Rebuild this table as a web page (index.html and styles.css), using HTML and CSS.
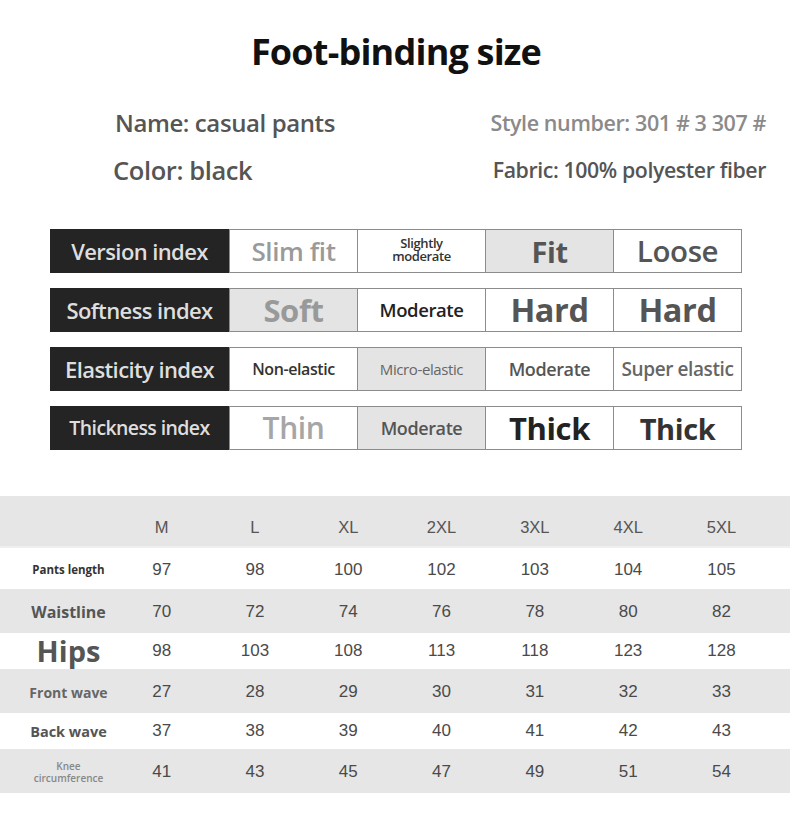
FILE: index.html
```html
<!DOCTYPE html>
<html>
<head>
<meta charset="utf-8">
<link rel="stylesheet" href="styles.css">
</head>
<body>
<div class="page">
  <h1 class="title">Foot-binding size</h1>
  <div class="info">
    <div class="info-left name">Name: casual pants</div>
    <div class="info-right style">Style number: 301 # 3 307 #</div>
    <div class="info-left color">Color: black</div>
    <div class="info-right fabric">Fabric: 100% polyester fiber</div>
  </div>

  <div class="index-table">
    <div class="irow">
      <div class="ilabel">Version index</div>
      <div class="icell c-slim">Slim fit</div>
      <div class="icell c-slight"><span class="ln">Slightly</span><span class="ln">moderate</span></div>
      <div class="icell sel c-fit">Fit</div>
      <div class="icell c-loose">Loose</div>
    </div>
    <div class="irow">
      <div class="ilabel">Softness index</div>
      <div class="icell sel c-soft">Soft</div>
      <div class="icell c-mod1">Moderate</div>
      <div class="icell c-hard">Hard</div>
      <div class="icell c-hard">Hard</div>
    </div>
    <div class="irow">
      <div class="ilabel">Elasticity index</div>
      <div class="icell c-non">Non-elastic</div>
      <div class="icell sel c-micro">Micro-elastic</div>
      <div class="icell c-mod2">Moderate</div>
      <div class="icell c-super">Super elastic</div>
    </div>
    <div class="irow">
      <div class="ilabel small">Thickness index</div>
      <div class="icell c-thin">Thin</div>
      <div class="icell sel c-mod3">Moderate</div>
      <div class="icell c-thick1">Thick</div>
      <div class="icell c-thick2">Thick</div>
    </div>
  </div>

  <div class="size-table">
    <div class="srow head">
      <div class="slabel"></div>
      <div class="sv">M</div><div class="sv">L</div><div class="sv">XL</div><div class="sv">2XL</div><div class="sv">3XL</div><div class="sv">4XL</div><div class="sv">5XL</div>
    </div>
    <div class="srow r-pants">
      <div class="slabel l-pants">Pants length</div>
      <div class="sv">97</div><div class="sv">98</div><div class="sv">100</div><div class="sv">102</div><div class="sv">103</div><div class="sv">104</div><div class="sv">105</div>
    </div>
    <div class="srow gray r-waist">
      <div class="slabel l-waist">Waistline</div>
      <div class="sv">70</div><div class="sv">72</div><div class="sv">74</div><div class="sv">76</div><div class="sv">78</div><div class="sv">80</div><div class="sv">82</div>
    </div>
    <div class="srow r-hips">
      <div class="slabel l-hips">Hips</div>
      <div class="sv">98</div><div class="sv">103</div><div class="sv">108</div><div class="sv">113</div><div class="sv">118</div><div class="sv">123</div><div class="sv">128</div>
    </div>
    <div class="srow gray r-front">
      <div class="slabel l-front">Front wave</div>
      <div class="sv">27</div><div class="sv">28</div><div class="sv">29</div><div class="sv">30</div><div class="sv">31</div><div class="sv">32</div><div class="sv">33</div>
    </div>
    <div class="srow r-back">
      <div class="slabel l-back">Back wave</div>
      <div class="sv">37</div><div class="sv">38</div><div class="sv">39</div><div class="sv">40</div><div class="sv">41</div><div class="sv">42</div><div class="sv">43</div>
    </div>
    <div class="srow gray r-knee">
      <div class="slabel l-knee">Knee<br>circumference</div>
      <div class="sv">41</div><div class="sv">43</div><div class="sv">45</div><div class="sv">47</div><div class="sv">49</div><div class="sv">51</div><div class="sv">54</div>
    </div>
  </div>
</div>
</body>
</html>
```

FILE: styles.css
```css
* { box-sizing: border-box; }
html, body { margin: 0; padding: 0; background: #fff; }
body { font-family: "Open Sans", "Noto Sans", sans-serif; width: 790px; height: 825px; overflow: hidden; }

.title {
  margin: 0;
  padding-top: 32px;
  height: 72px;
  line-height: 40px;
  font-size: 36px;
  font-weight: 700;
  color: #111;
  text-align: center;
  letter-spacing: -0.8px;
  padding-left: 2px;
}

.info {
  margin-top: 36px;
  display: grid;
  grid-template-columns: 1fr 1fr;
  row-gap: 17px;
  padding: 0 24px 0 113px;
  line-height: 30px;
}
.info-left, .info-right { font-weight: 600; letter-spacing: -0.4px; white-space: nowrap; }
.info-right { text-align: right; }
.name { font-size: 24px; color: #555; padding-left: 2px; }
.color { font-size: 25.5px; color: #555; }
.style { font-size: 21.5px; color: #8a8a8a; }
.fabric { font-size: 21.3px; color: #555; }

.index-table {
  margin: 44px 0 0 50px;
  width: 692px;
  display: flex;
  flex-direction: column;
  gap: 15px;
}
.irow {
  display: grid;
  grid-template-columns: 179px repeat(4, 1fr);
  grid-template-rows: 42px;
  height: 44px;
  border: 1px solid #8c8c8c;
  border-left: none;
}
.ilabel {
  background: #242424;
  color: #dedede;
  font-weight: 600;
  font-size: 22px;
  line-height: 1;
  letter-spacing: -0.6px;
  display: flex;
  align-items: center;
  justify-content: center;
  margin: -1px 0;
  white-space: nowrap;
}
.ilabel.small { font-size: 19.5px; }
.icell {
  border-left: 1px solid #8c8c8c;
  display: flex;
  align-items: center;
  justify-content: center;
  text-align: center;
  font-weight: 700;
  line-height: 1;
  letter-spacing: -0.4px;
  color: #555;
  white-space: nowrap;
  overflow: visible;
}
.icell.sel { background: #e4e4e4; }
.c-slim { color: #9a9a9a; font-size: 26px; font-weight: 600; }
.c-slight { flex-direction: column; font-size: 13px; line-height: 13px; color: #333; font-weight: 600; padding-bottom: 2px; }
.c-slight .ln { display: block; }
.c-fit { font-size: 29px; color: #555; }
.c-loose { font-size: 29.5px; color: #555; font-weight: 600; }
.c-soft { font-size: 31px; color: #999; }
.c-mod1 { font-size: 18.5px; color: #222; font-weight: 600; }
.c-hard { font-size: 32.5px; color: #555; }
.c-non { font-size: 16px; color: #333; font-weight: 600; }
.c-micro { font-size: 15px; color: #666; font-weight: 400; }
.c-mod2 { font-size: 18px; color: #555; font-weight: 600; }
.c-super { font-size: 19px; color: #666; font-weight: 600; }
.c-thin { font-size: 30px; color: #a6a6a6; font-weight: 600; }
.c-mod3 { font-size: 18px; color: #555; font-weight: 600; }
.c-thick1 { font-size: 31px; color: #222; }
.c-thick2 { font-size: 29px; color: #333; }

.size-table {
  margin-top: 46px;
  width: 790px;
}
.srow {
  display: grid;
  grid-template-columns: 115px repeat(7, 93.3px);
  align-items: center;
}
.srow.head { background: #e6e6e6; height: 52px; border-bottom: 2px solid #efefef; padding-top: 12px; }
.srow.gray { background: #e6e6e6; height: 44px; }
.r-pants { height: 41px; padding-top: 2px; }
.r-hips { height: 36px; }
.r-back { height: 36px; }
.srow.gray { padding-top: 2px; }
.sv {
  text-align: center;
  font-family: "Liberation Sans", Arial, sans-serif;
  font-size: 17px;
  color: #4a4a4a;
}
.head .sv { color: #555; font-size: 16.5px; }
.slabel {
  text-align: center;
  padding-left: 22px;
  font-weight: 700;
  color: #555;
  white-space: nowrap;
}
.l-pants { font-size: 11.5px; color: #333; }
.l-waist { font-size: 16px; color: #555; }
.l-hips { font-size: 29px; line-height: 30px; color: #555; }
.l-front { font-size: 14px; color: #666; }
.l-back { font-size: 14.5px; color: #555; }
.l-knee { font-size: 10px; line-height: 12.5px; font-weight: 600; color: #888; }
```
